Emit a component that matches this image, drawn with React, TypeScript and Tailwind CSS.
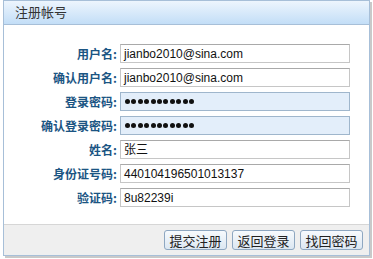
export default function App() {
  const rows: { label: string; value?: string; password?: boolean }[] = [
    { label: "用户名:", value: "jianbo2010@sina.com" },
    { label: "确认用户名:", value: "jianbo2010@sina.com" },
    { label: "登录密码:", password: true },
    { label: "确认登录密码:", password: true },
    { label: "姓名:", value: "张三" },
    { label: "身份证号码:", value: "440104196501013137" },
    { label: "验证码:", value: "8u82239i" },
  ];

  return (
    <div
      className="w-[373px] h-[259px] bg-white"
      style={{ fontFamily: '"Liberation Sans", Arial, "Noto Sans CJK SC", sans-serif' }}
    >
      <div className="ml-[3px] w-[367px] border border-[#a7bfd8] shadow-[2px_2px_0_#c9c9c9]">
        {/* Header */}
        <div className="h-[24px] border-b border-[#a7bfd8] bg-gradient-to-b from-[#edf5fd] to-[#c3def7] pl-[11px] flex items-center">
          <span className="text-[13px] text-[#333333]">注册帐号</span>
        </div>

        {/* Form */}
        <div className="pt-[19px] pb-[17px] flex flex-col gap-[5px]">
          {rows.map((r) => (
            <div key={r.label} className="flex items-center h-[19px]">
              <div
                className="w-[113px] text-right text-[12px] font-bold text-[#1b5583] leading-none"
                style={{ fontFamily: '"Noto Sans CJK SC", sans-serif' }}
              >
                {r.label}
              </div>
              {r.password ? (
                <div className="ml-[3px] w-[230px] h-[19px] border border-[#9fb6cc] bg-[#e3eefa] flex items-center gap-[1.4px] pl-[4px]">
                  {Array.from({ length: 11 }).map((_, i) => (
                    <span key={i} className="w-[5px] h-[5px] rounded-full bg-[#111111]" />
                  ))}
                </div>
              ) : (
                <div className="ml-[3px] w-[230px] h-[19px] border border-[#c6c6c6] border-t-[#a9a9a9] bg-white flex items-center pl-[3px] text-[12px] text-[#111111] leading-none">
                  {r.value}
                </div>
              )}
            </div>
          ))}
        </div>

        {/* Footer */}
        <div className="h-[31px] border-t border-[#d6d6d6] bg-[#efefef] flex items-center justify-end gap-[5px] pr-[6px]">
          {["提交注册", "返回登录", "找回密码"].map((b) => (
            <button
              key={b}
              className="w-[63px] h-[20px] rounded-[3px] border border-[#8ea7c1] bg-gradient-to-b from-[#f7fafd] to-[#dce7f2] text-[13px] text-[#222222] leading-none"
              style={{ fontFamily: '"Noto Sans CJK SC", sans-serif' }}
            >
              {b}
            </button>
          ))}
        </div>
      </div>
    </div>
  );
}
